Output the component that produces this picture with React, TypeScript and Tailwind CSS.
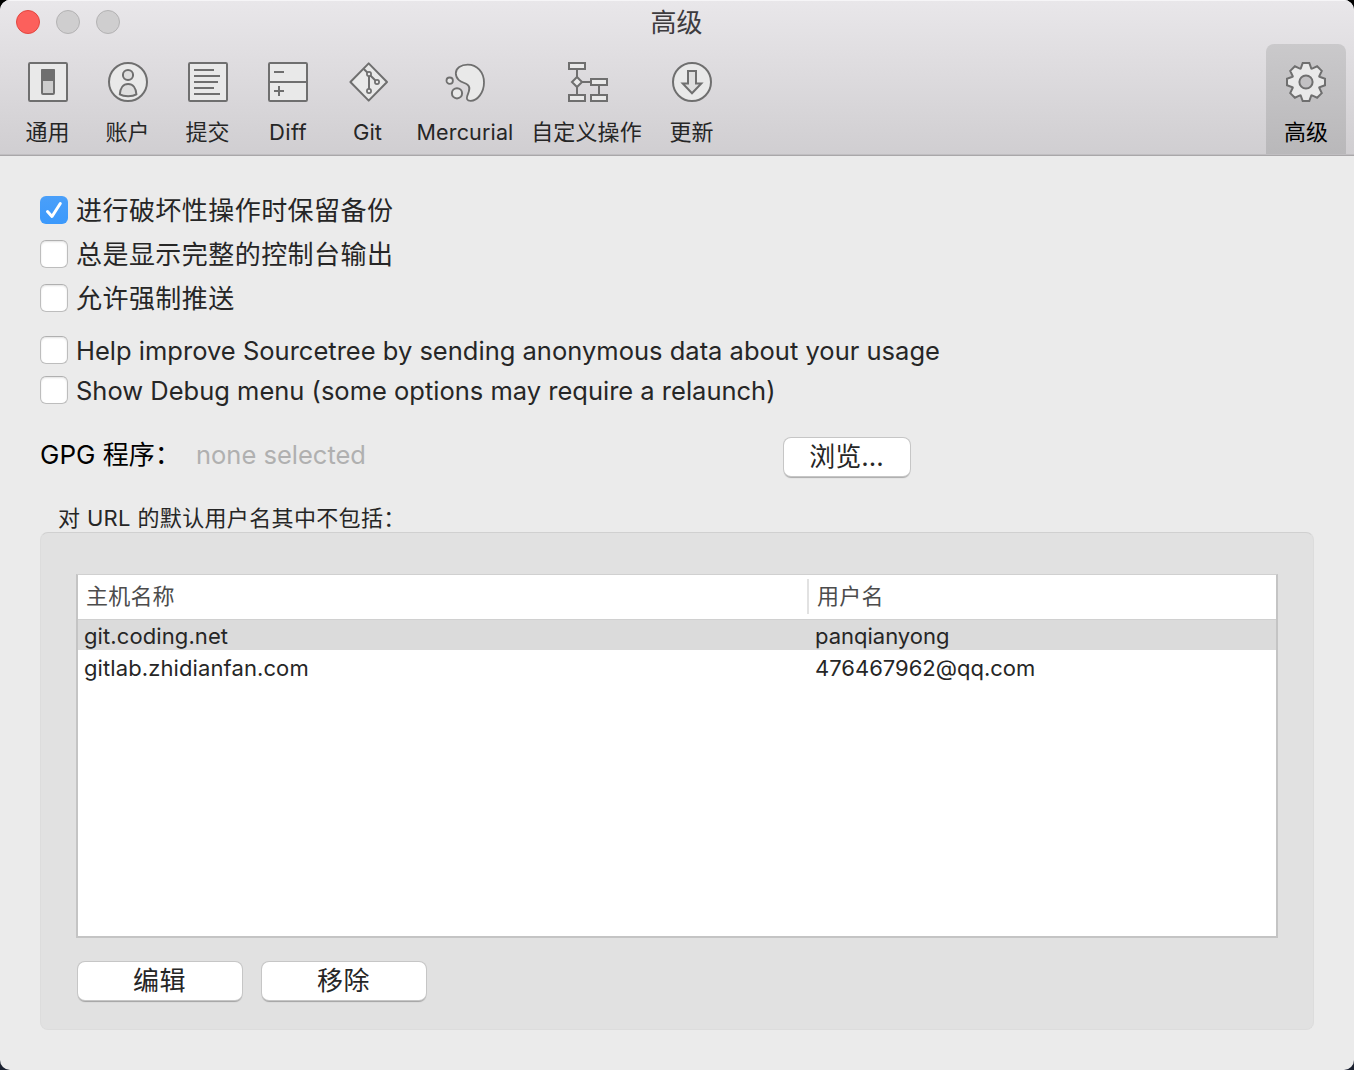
import type { ReactNode } from "react";

const INK = "#6f6f6f";
const FILL = "#e9e9e9";

function Icon({ children, className = "" }: { children: ReactNode; className?: string }) {
  return (
    <svg
      width="40"
      height="40"
      viewBox="0 0 40 40"
      fill={FILL}
      stroke={INK}
      strokeWidth="2"
      className={`block shrink-0 overflow-visible ${className}`}
    >
      {children}
    </svg>
  );
}

const GeneralIcon = () => (
  <Icon>
    <rect x="1" y="1" width="38" height="38" rx="1.2" />
    <rect x="14" y="8" width="12" height="24" rx="1" fill="#cdcdcd" />
    <rect x="14" y="8" width="12" height="10" fill={INK} strokeLinejoin="round" />
  </Icon>
);

const AccountIcon = () => (
  <Icon>
    <circle cx="20" cy="20" r="19" />
    <circle cx="20" cy="13" r="5.1" fill="#dedede" />
    <path d="M11.8 32.3C12.2 26.3 15.2 22 20.1 22S28 26.3 28.4 32.3C24.5 34.8 15.8 34.8 11.8 32.3Z" fill="#dedede" />
  </Icon>
);

const CommitIcon = () => (
  <Icon>
    <rect x="1" y="1" width="38" height="38" rx="1.2" />
    <path d="M6 8H26M6 14H32M6 20H30M6 26H26M6 32H32" />
  </Icon>
);

const DiffIcon = () => (
  <Icon>
    <rect x="1" y="1" width="38" height="38" rx="1.2" />
    <path d="M1 20H39M6 10H16M6 29H16M11 24V34" />
  </Icon>
);

const GitIcon = () => (
  <Icon>
    <path d="M20.7 1.4L39 20L20.7 38.6L2.4 20Z" strokeLinejoin="round" />
    <path d="M15.8 7L29 20M21 12V29" />
    <circle cx="21" cy="12" r="2.1" strokeWidth="1.7" />
    <circle cx="29" cy="20" r="2.1" strokeWidth="1.7" />
    <circle cx="21" cy="29" r="2.1" strokeWidth="1.7" />
  </Icon>
);

const MercurialIcon = () => (
  <Icon>
    <circle cx="4.7" cy="18.7" r="3.2" strokeWidth="1.8" />
    <circle cx="12" cy="31.3" r="5.1" />
    <path
      d="M10.8 11.3C10.8 6 16 2.6 22.7 2.6C32 2.6 39 10 39 20.5C39 30.5 32.5 38.8 25.7 38.8C21.8 38.8 21.3 36.8 22.3 33.8C23.6 30 26.4 25 22.2 22.4C18.5 20.2 10.8 19 10.8 11.3Z"
      strokeWidth="1.8"
    />
  </Icon>
);

const CustomActionIcon = () => (
  <Icon>
    <path d="M9 7V33M9 20H23M31 23V33" />
    <rect x="1" y="1" width="16" height="6" />
    <rect x="23" y="17" width="16" height="6" />
    <rect x="1" y="33" width="16" height="6" />
    <rect x="23" y="33" width="16" height="6" />
    <path d="M9 15L14 20L9 25L4 20Z" />
  </Icon>
);

const UpdateIcon = () => (
  <Icon>
    <circle cx="20" cy="20" r="19" />
    <path d="M16 9H24V21.5H29.3L20 31.3L10.7 21.5H16Z" fill="#dedede" />
  </Icon>
);

const toothPoints = [
  [-5.3, -13.4],
  [-3.3, -19],
  [3.3, -19],
  [5.3, -13.4],
];
const gearPath =
  "M" +
  Array.from({ length: 8 }, (_, i) => {
    const a = (i * Math.PI) / 4;
    return toothPoints
      .map(([x, y]) => {
        const px = 20 + x * Math.cos(a) - y * Math.sin(a);
        const py = 20 + x * Math.sin(a) + y * Math.cos(a);
        return `${px.toFixed(2)} ${py.toFixed(2)}`;
      })
      .join("L");
  }).join("L") +
  "Z";

const AdvancedIcon = () => (
  <Icon>
    <path d={gearPath} />
    <circle cx="20" cy="20" r="6.6" fill="#c2c1c3" />
  </Icon>
);

const cjkLabel = "mr-px tracking-[0.05px]";

const tools = [
  { label: "通用", icon: <GeneralIcon />, width: "w-20", text: cjkLabel },
  { label: "账户", icon: <AccountIcon />, width: "w-20", text: cjkLabel },
  { label: "提交", icon: <CommitIcon />, width: "w-20", text: cjkLabel },
  { label: "Diff", icon: <DiffIcon />, width: "w-20", text: "tracking-[0.35px]" },
  { label: "Git", icon: <GitIcon />, width: "w-20", text: "mr-px tracking-[0.1px]" },
  { label: "Mercurial", icon: <MercurialIcon />, width: "w-[114px]", text: "text-[21.5px] tracking-[0.15px]" },
  { label: "自定义操作", icon: <CustomActionIcon />, width: "w-[131px]", text: "mr-[2px] tracking-[0.1px]" },
  { label: "更新", icon: <UpdateIcon />, width: "w-[77px]", text: "" },
];

const options = [
  { label: "进行破坏性操作时保留备份", checked: true, row: "h-11", text: "mt-[2px] tracking-[0.45px]" },
  { label: "总是显示完整的控制台输出", checked: false, row: "h-11", text: "mt-[2px] tracking-[0.45px]" },
  { label: "允许强制推送", checked: false, row: "h-11", text: "mt-[2px] tracking-[0.45px]" },
  {
    label: "Help improve Sourcetree by sending anonymous data about your usage",
    checked: false,
    row: "mt-2.5 h-10",
    text: "mt-[2px] text-[25.5px] tracking-[0.01px]",
  },
  {
    label: "Show Debug menu (some options may require a relaunch)",
    checked: false,
    row: "h-10",
    text: "mt-[2px] text-[25.5px]",
  },
];

function Checkbox({ checked }: { checked: boolean }) {
  if (checked) {
    return (
      <span className="block size-7 shrink-0 rounded-[6px] bg-linear-to-b from-[#4a9ff9] to-[#3b99fc]">
        <svg width="28" height="28" viewBox="0 0 28 28" fill="none" stroke="#fff" strokeWidth="3" strokeLinecap="round" strokeLinejoin="round">
          <path d="M7.5 15.5L12 20.5L20.3 7.5" />
        </svg>
      </span>
    );
  }
  return (
    <span className="block size-7 shrink-0 rounded-[6px] border border-[#bdbdbd] border-t-[#b0b0b0] bg-white shadow-[inset_0_1px_2px_rgba(0,0,0,0.12)]" />
  );
}

function Button({ children, className }: { children: ReactNode; className: string }) {
  return (
    <button
      className={`flex items-center justify-center rounded-[7px] bg-white pr-px pb-[2px] text-[26px] whitespace-nowrap text-[#262626] shadow-[0_0_0_1px_#c6c6c6,0_1.5px_1px_0_rgba(0,0,0,0.28)] ${className}`}
    >
      {children}
    </button>
  );
}

const hosts = [
  { host: "git.coding.net", user: "panqianyong", selected: true },
  { host: "gitlab.zhidianfan.com", user: "476467962@qq.com", selected: false },
];

export default function App() {
  return (
    <div className="h-[1070px] w-[1354px] overflow-hidden bg-linear-to-b from-black to-[#1b2130] font-['Inter','Noto_Sans_CJK_SC',sans-serif] text-[#262626]">
      <div className="flex h-full flex-col overflow-hidden rounded-[10px] bg-[#ebebeb]">
        <header className="h-[156px] shrink-0 border-b border-[#a9a7a9] bg-linear-to-b from-[#e9e7ea] to-[#d0ced1] shadow-[inset_0_1px_0_#f6f5f7,inset_0_-1px_0_#c0bec1]">
          <div className="grid h-11 grid-cols-3 items-center">
            <div className="flex gap-4 pl-4">
              <span className="size-6 rounded-full border border-[#e2463f] bg-[#fc605c]" />
              <span className="size-6 rounded-full border border-[#b3b2b3] bg-[#cfcecf]" />
              <span className="size-6 rounded-full border border-[#b3b2b3] bg-[#cfcecf]" />
            </div>
            <h1 className="mt-[2px] mr-px text-center text-[26px] leading-10 text-[#3d3b3e]">高级</h1>
          </div>
          <nav className="flex h-[110px] pr-2 pl-2 text-[22px] leading-8">
            {tools.map((t) => (
              <div key={t.label} className={`flex shrink-0 flex-col items-center pt-[18px] ${t.width}`}>
                {t.icon}
                <span className={`mt-[14px] whitespace-nowrap ${t.text}`}>{t.label}</span>
              </div>
            ))}
            <div className="ml-auto flex w-20 flex-col items-center rounded-t-lg bg-linear-to-b from-[#cac9cb] to-[#b9b8ba] pt-[18px] text-black">
              <AdvancedIcon />
              <span className="mt-[14px]">高级</span>
            </div>
          </nav>
        </header>

        <main className="flex flex-col px-10 pt-8">
          {options.map((o) => (
            <label key={o.label} className={`flex items-center gap-2 text-[26px] whitespace-nowrap ${o.row}`}>
              <Checkbox checked={o.checked} />
              <span className={`leading-10 ${o.text}`}>{o.label}</span>
            </label>
          ))}

          <div className="mt-[27px] flex h-10 items-center text-[26px] whitespace-nowrap">
            <span className="mb-[5px] w-[156px] text-black">GPG 程序：</span>
            <span className="mb-[3px] w-[588px] text-[25.5px] text-[#b0b0b0]">none selected</span>
            <Button className="h-[38px] w-[126px]">浏览...</Button>
          </div>

          <div className="mt-[25px] ml-[18px] h-[30px] text-[22px] leading-[32px] tracking-[0.35px] whitespace-nowrap">
            对 URL 的默认用户名其中不包括：
          </div>

          <section className="h-[498px] rounded-lg border border-[#dcdcdc] border-t-[#d0d0d0] bg-[#e1e1e1] px-[35px] pt-[41px]">
            <div className="h-[364px] border-2 border-t border-[#c4c4c4] border-t-[#d0d0d0] bg-white text-[22px] whitespace-nowrap">
              <div className="flex h-[45px] items-center border-b border-[#d0d0d0] text-[#4c4c4c]">
                <span className="mb-[2px] w-[729px] pl-2 leading-8 tracking-[0.2px]">主机名称</span>
                <span className="mb-[2px] flex h-[35px] items-center border-l-2 border-[#e2e2e2] pl-2 tracking-[0.2px]">用户名</span>
              </div>
              {hosts.map((h) => (
                <div
                  key={h.host}
                  className={`flex items-center leading-8 ${h.selected ? "h-[30px] bg-[#dbdbdb] pt-[2px]" : "mt-[2px] h-8"}`}
                >
                  <span className="w-[731px] pl-1.5 tracking-[0.1px]">{h.host}</span>
                  <span className="pl-1.5">{h.user}</span>
                </div>
              ))}
            </div>
            <div className="mt-6 ml-[2px] flex gap-5">
              <Button className="h-[38px] w-[164px] tracking-[0.4px]">编辑</Button>
              <Button className="h-[38px] w-[164px] tracking-[0.4px]">移除</Button>
            </div>
          </section>
        </main>
      </div>
    </div>
  );
}
